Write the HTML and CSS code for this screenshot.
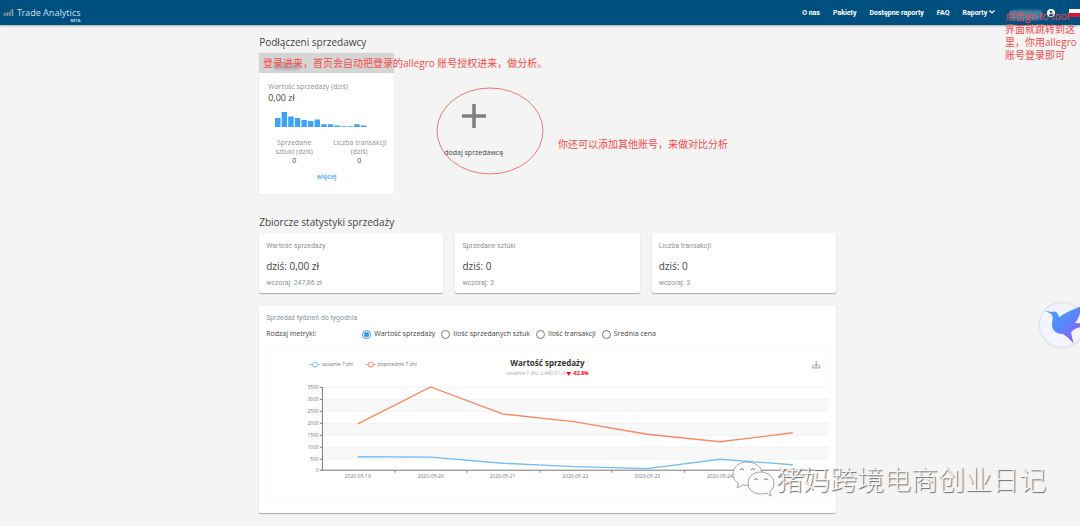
FILE: index.html
```html
<!DOCTYPE html>
<html lang="pl">
<head>
<meta charset="utf-8">
<title>Trade Analytics</title>
<link rel="stylesheet" href="styles.css">
</head>
<body>
<header class="topbar">
  <a class="brand" href="#">
    <svg class="brand-mark" width="12" height="10" viewBox="0 0 12 10" fill="none"><path d="M2 6v2M4.500 4.500v3.500M7 4v4M9.500 1v7" stroke="#6f9dbb" stroke-width="1.500"/><path d="M0 6.500 3 5l2 1.500L9.500 1" stroke="#c4795a"/></svg>
    <span class="brand-name">Trade Analytics</span>
    <span class="beta">BETA</span>
  </a>
  <nav class="nav">
    <a href="#">O nas</a>
    <a href="#">Pakiety</a>
    <a href="#">Dostępne raporty</a>
    <a href="#">FAQ</a>
    <a href="#">Raporty <svg width="6" height="6" viewBox="0 0 6 6" fill="none"><path d="M.5 1.500 3 4 5.500 1.500" stroke="#fff" stroke-width="1.200"/></svg></a>
  </nav>
  <span class="user-name"></span>
  <svg class="avatar" width="8" height="8" viewBox="0 0 8 8"><circle cx="4" cy="4" r="4" fill="#fff"/><circle cx="4" cy="3" r="1.300" fill="#00507f"/><path d="M1.600 6.200c.8-1.500 4-1.500 4.800 0-1.200 1.500-3.600 1.500-4.800 0" fill="#00507f"/></svg>
  <span class="flag"></span>
</header>

<main class="page">
  <h2>Podłączeni sprzedawcy</h2>
  <section class="sellers">
    <article class="seller">
      <div class="seller-head"><span class="seller-name"></span></div>
      <div class="seller-body">
        <div class="muted">Wartość sprzedaży (dziś)</div>
        <div class="amount">0,00 zł</div>
        <svg class="spark" width="92" height="16" viewBox="0 0 92 16" fill="#3fa2f5"><path d="M0 7h5.500v9H0zM6.600 1h5.500v15H6.600zM13.200 5.500h5.500V16h-5.500zM19.800 7h5.500v9h-5.500zM26.400 9h5.500v7h-5.500zM33 10h5.500v6H33zM39.600 8.500h5.500V16h-5.500zM46.200 13.200h5.500V16h-5.500zM52.800 13.200h5.500V16h-5.500zM59.400 14.500h5.500V16h-5.500zM66 15.200h5.500v.8H66zM72.600 15.200h5.500v.8h-5.500zM79.200 13.200h5.500V16h-5.500zM85.800 14.500h5.500V16h-5.500z"/></svg>
        <div class="pair">
          <div>Sprzedane<br>sztuki (dziś)<b>0</b></div>
          <div>Liczba transakcji<br>(dziś)<b>0</b></div>
        </div>
        <a class="more" href="#">więcej</a>
      </div>
    </article>
    <button class="add" type="button">
      <svg width="24" height="24" viewBox="0 0 24 24"><path d="M12 0v24M0 12h24" stroke="#808080" stroke-width="3.600"/></svg>
      <span>dodaj sprzedawcę</span>
    </button>
  </section>

  <h2>Zbiorcze statystyki sprzedaży</h2>
  <section class="stats">
    <article class="card"><h3>Wartość sprzedaży</h3><p class="today">dziś: 0,00 zł</p><p class="yesterday">wczoraj: 247,86 zł</p></article>
    <article class="card"><h3>Sprzedane sztuki</h3><p class="today">dziś: 0</p><p class="yesterday">wczoraj: 3</p></article>
    <article class="card"><h3>Liczba transakcji</h3><p class="today">dziś: 0</p><p class="yesterday">wczoraj: 3</p></article>
  </section>

  <section class="card report">
    <h3>Sprzedaż tydzień do tygodnia</h3>
    <div class="metric">
      <span class="metric-title">Rodzaj metryki:</span>
      <label><input type="radio" name="metric" checked>Wartość sprzedaży</label>
      <label><input type="radio" name="metric">Ilość sprzedanych sztuk</label>
      <label><input type="radio" name="metric">Ilość transakcji</label>
      <label><input type="radio" name="metric">Średnia cena</label>
    </div>
    <div class="chart">
      <svg viewBox="0 0 564 146" role="img" aria-label="Wartość sprzedaży">
        <path d="M57 49h507v12H57zM57 73h507v12H57zM57 97h507v12H57z" fill="#f8f8f8"/>
        <path d="M57 37.500h507M57 49.500h507M57 61.500h507M57 73.500h507M57 85.500h507M57 97.500h507M57 109.500h507" stroke="#f3f3f3" fill="none"/>
        <path d="M56.500 37v84M54 37.500h2M54 49.500h2M54 61.500h2M54 73.500h2M54 85.500h2M54 97.500h2M54 109.500h2M54 120.500h510M129.500 121v2M201.500 121v2M274.500 121v2M346.500 121v2M419.500 121v2M491.500 121v2" stroke="#777" fill="none"/>
        <g class="axis end">
          <text x="53" y="38">3500</text><text x="53" y="50">3000</text><text x="53" y="62">2500</text><text x="53" y="74">2000</text><text x="53" y="86">1500</text><text x="53" y="98">1000</text><text x="53" y="110">500</text><text x="53" y="121">0</text>
        </g>
        <g class="axis mid">
          <text x="92" y="127">2020-05-19</text><text x="165" y="127">2020-05-20</text><text x="237" y="127">2020-05-21</text><text x="310" y="127">2020-05-22</text><text x="382" y="127">2020-05-23</text><text x="455" y="127">2020-05-24</text><text x="527" y="127">2020-05-25</text>
        </g>
        <path d="M92 74 165 37l72 27 73 8 72 12.500 73 7.500 73-9" stroke="#fb8763" stroke-width="1.400" fill="none"/>
        <path d="M92 107l73 .3 72 6.200 73 3.300 72 2.200 73-9.500 73 5.500" stroke="#76bdf8" stroke-width="1.300" fill="none"/>
        <g fill="#fff"><path d="M44 14.500h10" stroke="#76bdf8"/><circle cx="49" cy="14.500" r="2.500" stroke="#76bdf8"/><path d="M100 14.500h10" stroke="#fb8763"/><circle cx="105" cy="14.500" r="2.500" stroke="#fb8763"/></g>
        <g class="legend"><text x="56" y="15">ostatnie 7 dni</text><text x="112" y="15">poprzednie 7 dni</text></g>
        <text class="chart-title" x="282" y="14">Wartość sprzedaży</text>
        <text class="chart-sub" x="282" y="24">ostatnie 7 dni: 2,440.91 zł <tspan class="drop">▼ -82.8%</tspan></text>
        <path d="M551.500 11v5.500M549 14l2.500 2.500 2.500-2.500M548 15.500V18h7v-2.500" stroke="#888" stroke-width=".8" fill="none"/>
      </svg>
    </div>
  </section>
</main>

<svg class="ring" width="108" height="88" viewBox="0 0 108 88" fill="none"><ellipse cx="54" cy="44" rx="53" ry="43" stroke="#f27676"/></svg>
<p class="note note-login">登录进来，首页会自动把登录的allegro 账号授权进来，做分析。</p>
<p class="note note-add">你还可以添加其他账号，来做对比分析</p>
<p class="note note-tool">点击go to tool<br>界面就跳转到这<br>里，你用allegro<br>账号登录即可</p>

<div class="bird">
  <svg width="44" height="44" viewBox="0 0 44 44"><defs><linearGradient id="g" x1="0" y1="0" x2="1" y2="1"><stop offset="0" stop-color="#3fa8ff"/><stop offset=".5" stop-color="#5a86fb"/><stop offset="1" stop-color="#b04df5"/></linearGradient></defs><path d="M5 7.500 11.500 9c3-1.500 7 0 7.500 5.500C24 10 32 7 41 3c0 6-2 12-6 17l8 .5v3c-5 1-9 2-12 6l2.500 11C30 36 26 33 23 31c-6 0-11-3-11-9 0-4 2-8-1-11z" fill="url(#g)"/></svg>
</div>

<div class="watermark">
  <svg width="44" height="36" viewBox="0 0 44 36"><g fill="#fdfdfd" stroke="#8d8d8d" stroke-width=".8"><path d="M15 1C7 1 1 6 1 13c0 4 2 7.500 5.500 9.500L5 27l6-3c10 2 19-3 19-11C30 6 23 1 15 1z"/><path d="M29 11c-8 0-13 5-13 11.500S22 33 29 33c2 0 3.500-.2 5-.8l5 2.600-1.200-4.300C40.500 28.500 42 26 42 22.500 42 16 36 11 29 11z"/></g><path d="M8 9q2-3 4 0M19 9q2-3 4 0M22 19q2-3 4 0M32 19q2-3 4 0" stroke="#777" fill="none"/></svg>
  <span>猪妈跨境电商创业日记</span>
</div>
</body>
</html>
```
FILE: styles.css
```css
* { box-sizing: border-box; }
body {
  margin: 0;
  position: relative;
  background: #f4f4f4;
  color: #444;
  font: 7px/10px "Open Sans", "Noto Sans CJK SC", sans-serif;
  overflow-x: hidden;
}
h2, h3, p { margin: 0; font-weight: 400; }
a { color: inherit; text-decoration: none; }

.topbar {
  display: flex;
  align-items: center;
  height: 25px;
  padding-left: 3px;
  background: #00507f;
  color: #fff;
  box-shadow: 0 1px 2px rgba(0, 0, 0, .3);
}
.brand { position: relative; display: flex; align-items: center; gap: 2px; color: #c3d9e6; }
.brand-name { font: 10px/14px "Noto Sans", sans-serif; font-size: 9px; }
.beta { position: absolute; right: 0; top: 12px; font-size: 4px; line-height: 5px; font-weight: 700; }
.nav { display: flex; gap: 13px; margin-left: auto; font: 700 7px/10px Roboto, sans-serif; }
.user-name {
  width: 34px;
  height: 10px;
  margin: 4px 4px 0 14px;
  border-radius: 5px;
  background: #4480a3;
  filter: blur(1px);
}
.avatar { margin-right: 14px; }
.flag { width: 11px; height: 8px; background: linear-gradient(#fff 50%, #dc143c 50%); }

.page { width: 53.4%; margin-left: 24%; padding: 10px 0 13px; }
h2 { margin-bottom: 4px; font-size: 10px; line-height: 14px; }

.sellers { display: grid; grid-template-columns: 135px 135px; gap: 12px; margin-bottom: 21px; }
.seller { background: #fff; box-shadow: 0 0 1px rgba(0, 0, 0, .15); }
.seller-head { height: 20px; padding: 9px 14px; background: #d5d5d5; }
.seller-name { display: block; width: 28px; height: 8px; border-radius: 4px; background: #b2b7ba; filter: blur(1px); }
.seller-body { display: flex; flex-direction: column; padding: 9px 9px 12px; }
.muted { color: #8b949c; }
.amount { font-size: 9px; line-height: 12px; }
.spark { margin: 7px 0 11px 7px; }
.pair { display: grid; grid-template-columns: 52px 52px; gap: 13px; line-height: 9px; text-align: center; white-space: nowrap; color: #8b949c; }
.pair b { display: block; font-weight: 400; color: #444; }
.more { margin-top: 7px; text-align: center; font-family: Roboto, sans-serif; color: #2f98f5; }
.add {
  display: flex;
  flex-direction: column;
  align-items: center;
  gap: 20px;
  padding: 51px 0 0;
  border: 0;
  background: none;
  color: #444;
  font: inherit;
}

.card { padding: 8px 7px 5px; border-radius: 2px; background: #fff; box-shadow: 0 1px 1px rgba(0, 0, 0, .3); }
.card h3, .yesterday { font: 7px/10px Roboto, sans-serif; color: #8b949c; }
.stats { display: grid; grid-template-columns: repeat(3, 1fr); gap: 12px; }
.today { margin: 8px 0 5px; font-size: 10px; line-height: 14px; }

.report { margin-top: 13px; padding: 7px 7px 17px; }
.metric { display: flex; align-items: center; gap: 6px; margin: 5px 0 10px; line-height: 12px; }
.metric-title { width: 90px; }
.metric label { display: flex; align-items: center; gap: 3px; white-space: nowrap; }
.metric input {
  appearance: none;
  width: 9px;
  height: 9px;
  margin: 0;
  border: 1px solid #777;
  border-radius: 50%;
  background: #fff;
}
.metric input:checked { border-color: #2f98f5; background: radial-gradient(#2f98f5 2px, #fff 3px); }
.chart { border-radius: 2px; box-shadow: 0 0 1px rgba(0, 0, 0, .2); }
.chart svg { display: block; width: 100%; }
.chart text { dominant-baseline: middle; }
.axis, .legend { font-size: 5px; fill: #777; }
.end { text-anchor: end; }
.mid { text-anchor: middle; }
.chart-title { font-size: 8px; font-weight: 700; fill: #333; text-anchor: middle; }
.chart-sub { font-size: 5px; fill: #aaa; text-anchor: middle; }
.drop { fill: #f00; font-weight: 700; }

.ring { position: absolute; left: 436px; top: 87px; }
.note { position: absolute; color: #f94b4b; font: 10px/13px "Open Sans", "Noto Sans CJK SC", sans-serif; white-space: nowrap; }
.note-login { left: 263px; top: 57px; }
.note-add { left: 558px; top: 138px; }
.note-tool { left: 1005px; top: 10px; }
.bird {
  position: absolute;
  left: 1040px;
  top: 303px;
  width: 44px;
  height: 44px;
  border-radius: 50%;
  background: #f2f5ff;
  box-shadow: 0 0 3px rgba(0, 0, 0, .2);
}
.watermark {
  position: absolute;
  left: 732px;
  top: 459px;
  display: flex;
  align-items: center;
  color: #f6f6f6;
  font: 300 27px/40px "Noto Sans CJK SC", sans-serif;
  text-shadow: 1px 1px 1px #666;
  white-space: nowrap;
}
```
